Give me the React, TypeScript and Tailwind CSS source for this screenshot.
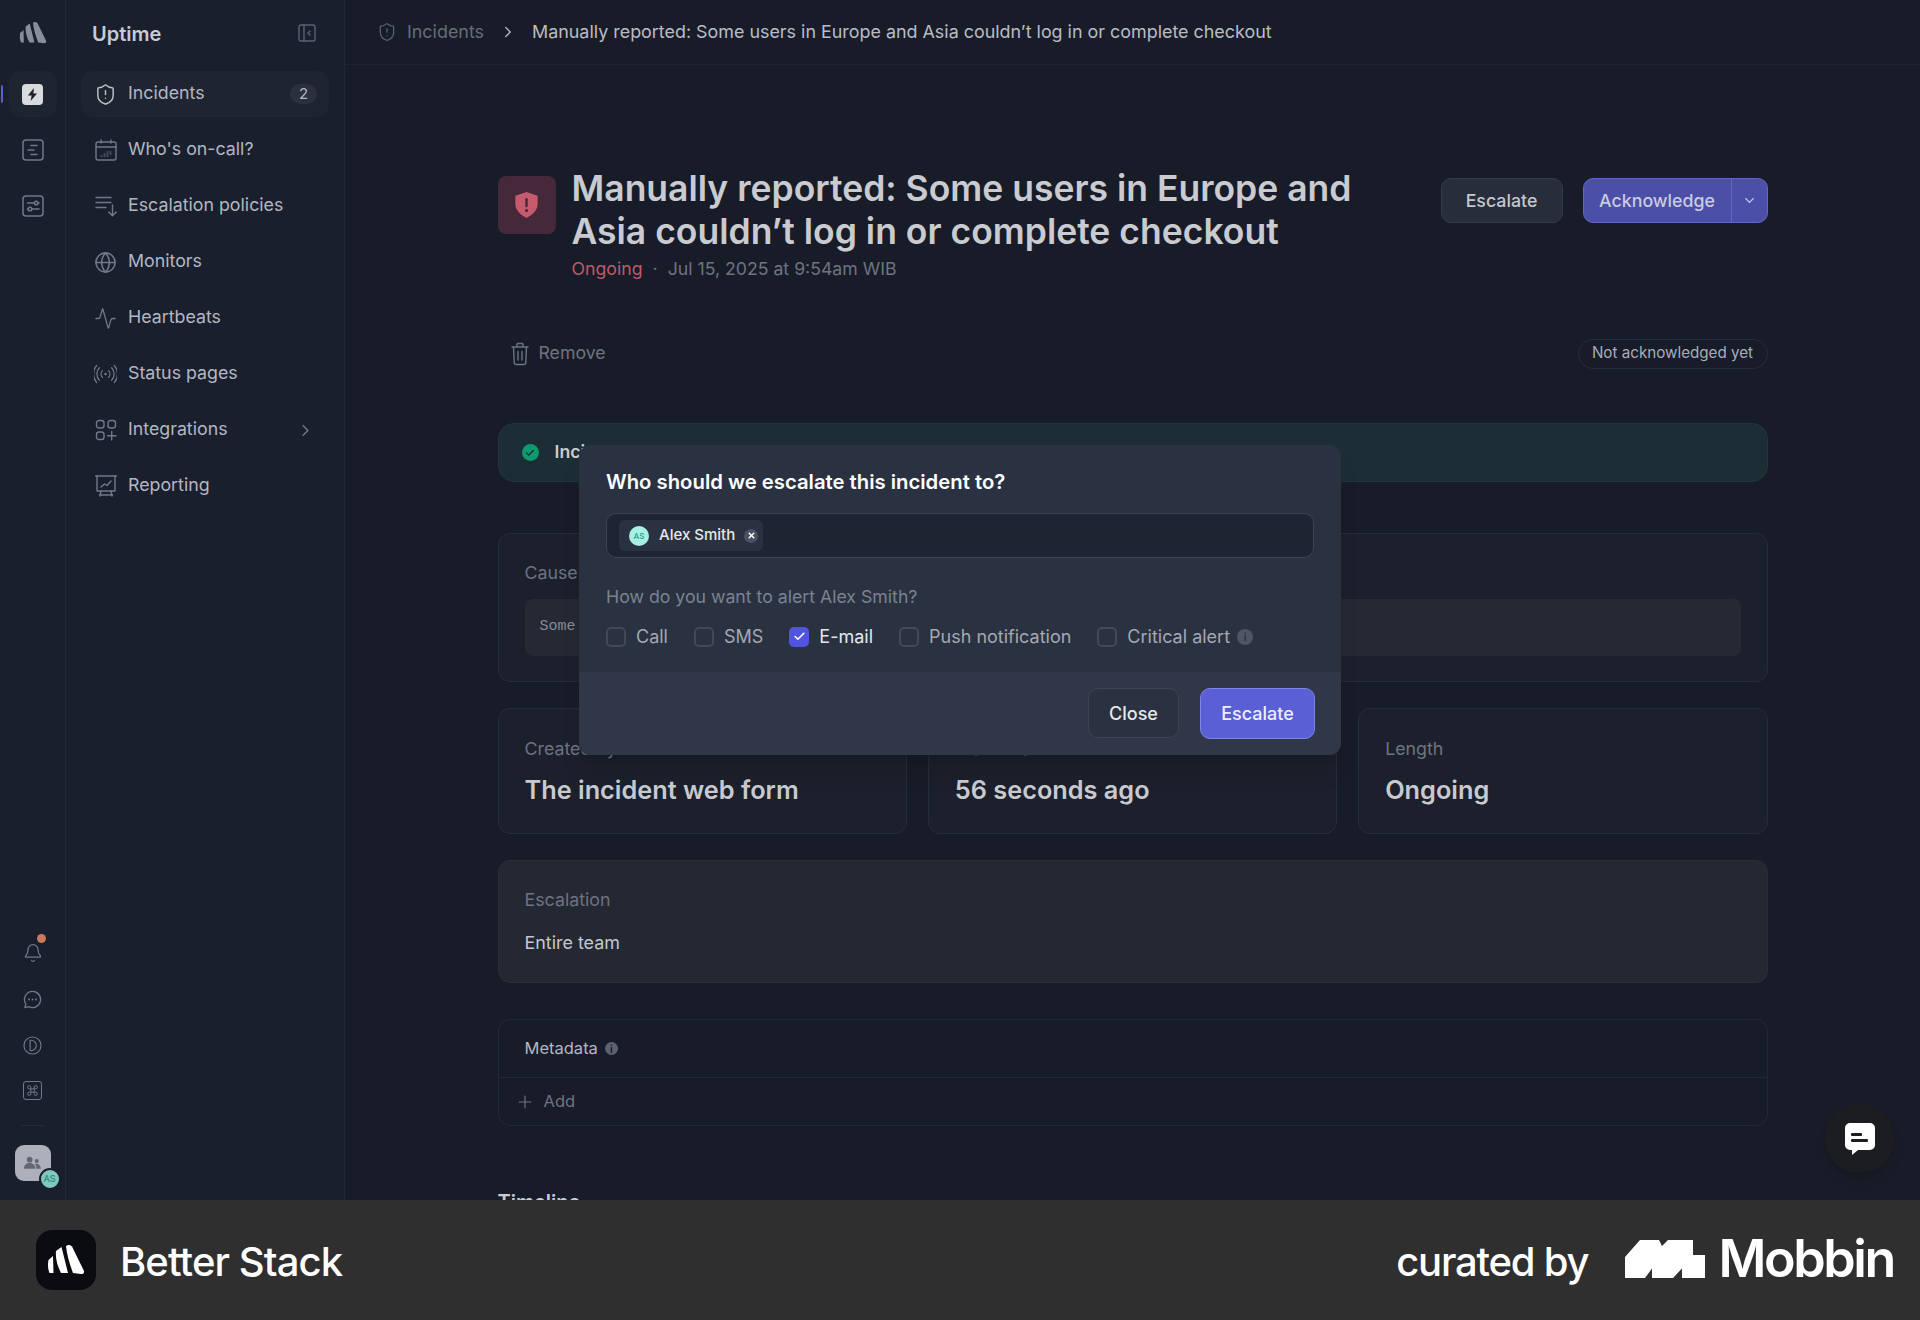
import React from "react";
import {
  Activity,
  Bell,
  Check,
  ChevronDown,
  ChevronRight,
  Command,
  Globe,
  Plus,
  ShieldAlert,
  X,
} from "lucide-react";

const BarsLogo = ({ className }: { className: string }) => (
  <svg viewBox="0 0 38 30" className={className} fill="currentColor">
    <path d="M1.5 15 L6 11 L6.5 28 L2.5 28 Q0 22 1.5 15Z" />
    <path d="M9 6 L14.5 2 L21 28 L14 28 Q8 16 9 6Z" />
    <path d="M19 1 Q22 -1 25 1.5 L37 26 Q37.5 29 34 29 L26 28 Q20 12 19 1Z" />
  </svg>
);

const EscalationIcon = () => (
  <svg viewBox="0 0 22 22" className="h-[22px] w-[22px]" fill="none" stroke="currentColor" strokeWidth="1.4" strokeLinecap="round" strokeLinejoin="round">
    <path d="M1 2.5h15M1 7.5h15M1 12.5h10" />
    <path d="M17.5 10v10.5M13.8 17l3.7 3.7 3.7-3.7" />
  </svg>
);

const CalendarIcon = () => (
  <svg viewBox="0 0 22 22" className="h-[22px] w-[22px]" fill="none" stroke="currentColor" strokeWidth="1.4" strokeLinecap="round">
    <rect x="1" y="3" width="20" height="18" rx="2" />
    <path d="M1 8h20M6 1v3M16 1v3" />
    <path d="M6 17h1M9 17h1M9 15h1M12 17h1M12 15h1M12 13h1M15 15h1M15 13h1" strokeWidth="1" />
  </svg>
);

const StatusIcon = () => (
  <svg viewBox="0 0 24 20" className="h-[20px] w-[24px]" fill="none" stroke="currentColor" strokeWidth="1.3" strokeLinecap="round">
    <circle cx="12" cy="10" r="1.3" fill="currentColor" stroke="none" />
    <path d="M8.8 6.5a5 5 0 0 0 0 7M15.2 6.5a5 5 0 0 1 0 7" />
    <path d="M5.6 3.5a9.5 9.5 0 0 0 0 13M18.4 3.5a9.5 9.5 0 0 1 0 13" />
    <path d="M2.8 1a14 14 0 0 0 0 18M21.2 1a14 14 0 0 1 0 18" />
  </svg>
);

const IntegrationsIcon = () => (
  <svg viewBox="0 0 22 22" className="h-[22px] w-[22px]" fill="none" stroke="currentColor" strokeWidth="1.4" strokeLinecap="round">
    <rect x="1.5" y="1.5" width="7.5" height="7.5" rx="2.5" />
    <rect x="13" y="1.5" width="7.5" height="7.5" rx="2.5" />
    <rect x="1.5" y="13" width="7.5" height="7.5" rx="2.5" />
    <path d="M16.7 12.5v8.5M12.5 16.7h8.5" />
  </svg>
);

const ReportingIcon = () => (
  <svg viewBox="0 0 22 22" className="h-[22px] w-[22px]" fill="none" stroke="currentColor" strokeWidth="1.4" strokeLinecap="round" strokeLinejoin="round">
    <path d="M0.5 1h21" />
    <path d="M2 1v15h18V1" />
    <path d="M6 12l3.5-3 2.5 1.5L16 6" />
    <path d="M6 16l-1 5M16 16l1 5M4.5 20h13" />
  </svg>
);

const TrashIcon = () => (
  <svg viewBox="0 0 18 24" className="h-[24px] w-[18px]" fill="none" stroke="currentColor" strokeWidth="1.4" strokeLinecap="round" strokeLinejoin="round">
    <path d="M1 5h16M6 5V2.5a1 1 0 0 1 1-1h4a1 1 0 0 1 1 1V5" />
    <path d="M2.5 5l.7 15.5a2 2 0 0 0 2 2h7.600a2 2 0 0 0 2-2L15.500 5" />
    <path d="M7 9.500v8.500M11 9.500v8.500" />
  </svg>
);

const ChatDotsIcon = () => (
  <svg viewBox="0 0 20 20" className="h-[19px] w-[19px]" fill="none" stroke="currentColor" strokeWidth="1.4" strokeLinejoin="round">
    <path d="M10 1.500a8.500 8.500 0 1 1-3.800 16.100L2 18.500l1-3.800A8.500 8.500 0 0 1 10 1.500z" />
    <circle cx="6.300" cy="10" r="1" fill="currentColor" stroke="none" />
    <circle cx="10" cy="10" r="1" fill="currentColor" stroke="none" />
    <circle cx="13.700" cy="10" r="1" fill="currentColor" stroke="none" />
  </svg>
);

const RailSquare = ({ children }: { children: React.ReactNode }) => (
  <svg viewBox="0 0 22 22" className="h-[22px] w-[22px]" fill="none" stroke="currentColor" strokeWidth="1.5" strokeLinecap="round">
    <rect x="1" y="1" width="20" height="20" rx="3" />
    {children}
  </svg>
);

const Info = ({ className }: { className: string }) => (
  <span className={`flex items-center justify-center rounded-full text-[10px] font-bold leading-none ${className}`}>i</span>
);

const nav = [
  { label: "Incidents", icon: <ShieldAlert className="h-[23px] w-[23px]" strokeWidth={1.5} />, active: true },
  { label: "Who's on-call?", icon: <CalendarIcon /> },
  { label: "Escalation policies", icon: <EscalationIcon /> },
  { label: "Monitors", icon: <Globe className="h-[23px] w-[23px]" strokeWidth={1.7} /> },
  { label: "Heartbeats", icon: <Activity className="h-[23px] w-[23px]" strokeWidth={1.4} /> },
  { label: "Status pages", icon: <StatusIcon /> },
  { label: "Integrations", icon: <IntegrationsIcon />, chevron: true },
  { label: "Reporting", icon: <ReportingIcon /> },
];

const Rail = () => (
  <aside className="flex w-[66px] shrink-0 flex-col items-center border-r border-[#252a37] bg-[#1a1f2d] text-[#727887]">
    <div className="flex h-[65px] items-center">
      <BarsLogo className="h-[22px] w-[28px] text-[#8a8e9c]" />
    </div>
    <div className="relative mt-[6px] flex h-[46px] w-[48px] items-center justify-center rounded-xl bg-[#1f2431]">
      <span className="absolute left-[-8px] top-[14px] h-[18px] w-[2px] rounded-r bg-[#5b60d6]" />
      <span className="flex h-[21px] w-[21px] items-center justify-center rounded-[4px] bg-[#d9dadd]">
        <svg viewBox="0 0 12 14" className="h-[13px] w-[11px] fill-[#1a1f2d]">
          <path d="M7.5 0 L1 8 H5 L4 14 L11 6 H7Z" />
        </svg>
      </span>
    </div>
    <div className="mt-[22px] flex flex-col gap-[34px]">
      <RailSquare>
        <path d="M9 6.5h6M6 11h6M9 15.500h6" />
      </RailSquare>
      <RailSquare>
        <path d="M5.500 8h7M16 8h1M5.500 14h1M10 14h7" />
        <circle cx="14.200" cy="8" r="1.800" />
        <circle cx="8" cy="14" r="1.800" />
      </RailSquare>
    </div>
    <div className="mt-auto flex flex-col items-center">
      <div className="relative flex h-[46px] items-center">
        <Bell className="h-[20px] w-[20px]" strokeWidth={1.5} />
        <span className="absolute right-[-3px] top-[4px] h-[9px] w-[9px] rounded-full bg-[#c87a5a]" />
      </div>
      <div className="flex h-[46px] items-center">
        <ChatDotsIcon />
      </div>
      <div className="flex h-[46px] items-center">
        <svg viewBox="0 0 20 20" className="h-[19px] w-[19px]" fill="none" stroke="currentColor" strokeWidth="1.2">
          <circle cx="10" cy="10" r="9" />
          <path d="M7.500 4.500h1a5.500 5.500 0 0 1 0 11h-1z" />
        </svg>
      </div>
      <div className="flex h-[44px] items-center">
        <span className="flex h-[19px] w-[19px] items-center justify-center rounded-[3px] border-[1.5px] border-current">
          <Command className="h-[13px] w-[13px]" strokeWidth={1.8} />
        </span>
      </div>
      <div className="mt-[13px] h-px w-[24px] bg-[#252a37]" />
      <div className="relative mb-[19px] mt-[19px] flex h-[36px] w-[36px] items-center justify-center rounded-[9px] bg-[#adb0ba]">
        <svg viewBox="0 0 18 14" className="h-[16px] w-[17px] fill-[#626776]">
          <circle cx="6" cy="3.500" r="3" />
          <circle cx="13.500" cy="5" r="2.200" />
          <path d="M0 13c0-4 2.500-6 6-6s6 2 6 6zM13 13c0-2-.5-4-1.500-5 3-1 6 1 6.500 5z" />
        </svg>
        <span className="absolute bottom-[-9px] right-[-10px] flex h-[22px] w-[22px] items-center justify-center rounded-full border-2 border-[#1a1f2d] bg-[#7fc8bc] text-[9px] font-medium text-[#2b8b7d]">
          AS
        </span>
      </div>
    </div>
  </aside>
);

const Sidebar = () => (
  <aside className="flex w-[279px] shrink-0 flex-col border-r border-[#232836] bg-[#1a1f2d] px-[15px]">
    <div className="flex h-[65px] items-center justify-between pl-[11px] pr-[13px]">
      <span className="mt-[2px] text-[20px] font-semibold text-[#c9cbd2]">Uptime</span>
      <svg viewBox="0 0 18 18" className="h-[18px] w-[18px] text-[#5c6272]" fill="none" stroke="currentColor" strokeWidth="1.4" strokeLinecap="round">
        <rect x="1" y="1" width="16" height="16" rx="2" />
        <path d="M6 1v16M12 7l-2 2 2 2" />
      </svg>
    </div>
    <nav className="mt-[6px] flex flex-col gap-[10px]">
      {nav.map((item) => (
        <div
          key={item.label}
          className={`flex h-[46px] items-center gap-[11px] rounded-xl pl-[13px] pr-[12px] ${item.active ? "bg-[#1f2431]" : ""}`}
        >
          <span className={`flex w-[23px] justify-center ${item.active ? "text-[#bfc2ca]" : "text-[#727887]"}`}>{item.icon}</span>
          <span className="mt-[-1px] flex-1 text-[17.8px] text-[#b3b7c1]">{item.label}</span>
          {item.active && (
            <span className="flex h-[20px] w-[27px] items-center justify-center rounded-full bg-[#2a303d] text-[15px] text-[#b3b7c1]">2</span>
          )}
          {item.chevron && <ChevronRight className="mr-[2px] h-[19px] w-[19px] text-[#727887]" strokeWidth={1.8} />}
        </div>
      ))}
    </nav>
  </aside>
);

const StatCard = ({ label, value }: { label: string; value: string }) => (
  <div className="h-[126px] rounded-xl border border-[#272c39] bg-[#1c202c] pl-[26px] pt-[26px]">
    <div className="text-[17.8px] leading-[28px] text-[#6e7381]">{label}</div>
    <div className="mt-[9px] text-[25.3px] font-semibold leading-[36px] text-[#c8cad0]">{value}</div>
  </div>
);

const Incident = () => (
  <div className="mx-auto w-[1270px] pt-[102px]">
    <div className="flex items-start">
      <div className="mt-[9px] flex h-[58px] w-[58px] shrink-0 items-center justify-center rounded-lg bg-[#45283a]">
        <svg viewBox="0 0 24 28" className="h-[26px] w-[23px]">
          <path d="M12 0 L24 4 V13 C24 20 18 25 12 28 C6 25 0 20 0 13 V4Z" fill="#c75a6c" />
          <rect x="10.700" y="6.500" width="2.600" height="10" rx="1.300" fill="#45283a" />
          <circle cx="12" cy="20" r="1.700" fill="#45283a" />
        </svg>
      </div>
      <div className="ml-[16px] flex-1">
        <h1 className="w-[800px] text-[35.5px] font-semibold leading-[43px] text-[#c9cbd1]">
          Manually reported: Some users in Europe and Asia couldn’t log in or complete checkout
        </h1>
        <div className="mt-[2px] flex items-center text-[17.7px] leading-[28px] text-[#6e7381]">
          <span className="text-[#bd5a6c]">Ongoing</span>
          <span className="mx-[10px]">·</span>
          <span>Jul 15, 2025 at 9:54am WIB</span>
        </div>
      </div>
      <div className="mt-[11px] flex items-center gap-[20px]">
        <button className="h-[45px] w-[122px] rounded-[10px] border border-[#343a48] bg-[#272d3a] pt-[2px] text-[17.8px] font-medium text-[#c4c7ce]">Escalate</button>
        <div className="flex h-[45px] w-[185px] rounded-[10px] border border-[#6166c8] bg-[#4b4fa8] text-[#c9cbe0]">
          <span className="flex flex-1 items-center justify-center pt-[2px] text-[17.8px] font-medium">Acknowledge</span>
          <span className="flex w-[36px] items-center justify-center border-l border-[#6166c8]">
            <ChevronDown className="h-[15px] w-[15px]" strokeWidth={2.2} />
          </span>
        </div>
      </div>
    </div>

    <div className="mt-[56px] flex h-[30px] items-center justify-between">
      <div className="flex items-center gap-[10px] pl-[13px] text-[17.7px] text-[#6e7381]">
        <TrashIcon />
        <span className="mt-[-1px]">Remove</span>
      </div>
      <span className="flex h-[30px] w-[190px] items-center justify-center rounded-full border border-[#272c39] pb-[1px] text-[15.2px] text-[#a9adb8]">Not acknowledged yet</span>
    </div>

    <div className="mt-[54px] flex h-[59px] items-center gap-[16px] rounded-2xl border border-[#20363a] bg-[#1c2d35] pl-[23px]">
      <span className="flex h-[17px] w-[17px] items-center justify-center rounded-full bg-[#0f9a6e]">
        <Check className="h-[10px] w-[10px] text-[#112233]" strokeWidth={3} />
      </span>
      <span className="text-[17.7px] font-semibold text-[#c9cbd1]">Incident started</span>
    </div>

    <div className="mt-[51px] h-[149px] rounded-xl border border-[#272c39] bg-[#1c202c] px-[26px] pt-[25px]">
      <div className="text-[17.8px] leading-[28px] text-[#6e7381]">Cause</div>
      <div className="mt-[12px] flex h-[57px] items-center rounded-lg bg-[#252933] pl-[15px] font-['Liberation_Mono',monospace] text-[15px] text-[#858a96]">Some users</div>
    </div>

    <div className="mt-[26px] grid grid-cols-3 gap-[21px]">
      <StatCard label="Created by" value="The incident web form" />
      <StatCard label="Started at" value="56 seconds ago" />
      <StatCard label="Length" value="Ongoing" />
    </div>

    <div className="mt-[26px] h-[123px] rounded-xl border border-[#292e3a] bg-[#242833] pl-[26px] pt-[25px]">
      <div className="text-[17.8px] leading-[28px] text-[#6e7381]">Escalation</div>
      <div className="mt-[15px] text-[17.9px] leading-[28px] text-[#c4c7ce]">Entire team</div>
    </div>

    <div className="mt-[36px] h-[107px] rounded-xl border border-[#232835]">
      <div className="flex h-[58px] items-center gap-[7px] border-b border-[#232835] pl-[26px] text-[16.5px] text-[#b3b7c1]">
        Metadata
        <Info className="h-[13px] w-[13px] bg-[#5c6272] text-[#1a1e2b]" />
      </div>
      <div className="flex h-[47px] items-center gap-[9px] pl-[16px] text-[16.5px] text-[#6e7381]">
        <Plus className="h-[20px] w-[20px]" strokeWidth={1.4} />
        Add
      </div>
    </div>

    <div className="mt-[62px] text-[20px] font-semibold leading-[28px] text-[#c9cbd1]">Timeline</div>
  </div>
);

const channels = [
  { label: "Call" },
  { label: "SMS" },
  { label: "E-mail", checked: true },
  { label: "Push notification" },
  { label: "Critical alert", info: true },
];

const EscalateDialog = () => (
  <div className="absolute left-[579px] top-[445px] w-[762px] overflow-hidden rounded-xl bg-[#2a3241] shadow-xl">
    <div className="h-[227px] px-[27px] pt-[23px]">
      <h2 className="text-[20.3px] font-semibold leading-[28px] text-white">Who should we escalate this incident to?</h2>
      <div className="mt-[17px] flex h-[45px] w-[708px] items-center rounded-[10px] border border-[#3c4454] bg-[#1e2431] pl-[12px]">
        <div className="flex h-[31px] items-center gap-[10px] rounded-md bg-[#2a3241] pl-[10px] pr-[5px]">
          <span className="flex h-[20px] w-[20px] items-center justify-center rounded-full bg-[#a6f0e4] text-[8px] font-medium text-[#2b9d8c]">AS</span>
          <span className="mt-[-1px] text-[15px] font-medium text-[#e6e7ea]">Alex Smith</span>
          <span className="ml-[-1px] flex h-[14px] w-[14px] items-center justify-center rounded-full bg-[#4a5262]">
            <X className="h-[9px] w-[9px] text-white" strokeWidth={4} />
          </span>
        </div>
      </div>
      <div className="mt-[25px] text-[17.7px] leading-[28px] text-[#7b8291]">How do you want to alert Alex Smith?</div>
      <div className="mt-[12px] flex items-center gap-[26px]">
        {channels.map((c) => (
          <label key={c.label} className="flex items-center gap-[10px]">
            {c.checked ? (
              <span className="flex h-[20px] w-[20px] items-center justify-center rounded-[5px] bg-[#5154e0]">
                <Check className="h-[13px] w-[13px] text-white" strokeWidth={3} />
              </span>
            ) : (
              <span className="h-[20px] w-[20px] rounded-[5px] border-2 border-[#414958]" />
            )}
            <span className={`text-[18px] ${c.checked ? "text-[#e6e7ea]" : "text-[#a3a8b3]"}`}>{c.label}</span>
            {c.info && <Info className="ml-[-3px] h-[16px] w-[16px] bg-[#4d5566] text-[#2a3241]" />}
          </label>
        ))}
      </div>
    </div>
    <div className="flex h-[83px] justify-end gap-[21px] bg-[#2f3748] pr-[26px] pt-[16px]">
      <button className="h-[50px] w-[91px] rounded-[10px] border border-[#3c4454] bg-[#2a3140] text-[18px] font-medium text-[#e6e7ea]">Close</button>
      <button className="h-[51px] w-[115px] rounded-[10px] border border-[#7f84ea] bg-[#5a5fd6] text-[18px] font-medium text-[#eceefb]">Escalate</button>
    </div>
  </div>
);

const Footer = () => (
  <footer className="flex h-[120px] shrink-0 items-center justify-between bg-[#2f2f2f] pl-[36px] pr-[26px] text-white">
    <div className="flex items-center gap-[24px]">
      <span className="flex h-[60px] w-[60px] items-center justify-center rounded-2xl bg-[#0b0c11]">
        <BarsLogo className="h-[30px] w-[38px] text-white" />
      </span>
      <span className="mt-[3px] text-[40px] font-medium tracking-[-0.9px]">Better Stack</span>
    </div>
    <div className="flex items-center">
      <span className="mt-[3px] text-[40px] font-medium tracking-[-1.2px]">curated by</span>
      <svg viewBox="0 0 80 38" className="ml-[37px] mt-[-3px] h-[38px] w-[80px] fill-white">
        <path d="M0 38 H20 L27 28.5 V38 H48 L57 28.5 V38 H80 V15 H68 V0 H43 L37 6 L34 0 H15 L0 17Z" />
      </svg>
      <span className="ml-[13px] mt-[-2px] text-[52px] font-semibold leading-none tracking-[-2.4px]">Mobbin</span>
    </div>
  </footer>
);

const App = () => {
  return (
    <div className="relative flex h-[1320px] w-[1920px] flex-col overflow-hidden bg-[#181c28] font-['Inter',sans-serif]">
      <div className="flex h-[1200px] overflow-hidden">
        <Rail />
        <Sidebar />
        <main className="flex min-w-0 flex-1 flex-col overflow-hidden">
          <div className="flex h-[65px] shrink-0 items-center border-b border-[#202431] pl-[32px] text-[17.9px]">
            <ShieldAlert className="h-[20px] w-[20px] text-[#5c6272]" strokeWidth={1.5} />
            <span className="ml-[10px] text-[#676c7a]">Incidents</span>
            <ChevronRight className="ml-[15px] h-[18px] w-[18px] text-[#b3b7c1]" strokeWidth={1.8} />
            <span className="ml-[15px] text-[#b9bcc5]">Manually reported: Some users in Europe and Asia couldn’t log in or complete checkout</span>
          </div>
          <Incident />
        </main>
      </div>
      <Footer />
      <EscalateDialog />
      <button className="absolute left-[1825px] top-[1104px] flex h-[69px] w-[69px] items-center justify-center rounded-full bg-[#1c1d21] shadow-lg">
        <svg viewBox="0 0 30 32" className="h-[32px] w-[30px]">
          <path d="M5 0h20a5 5 0 0 1 5 5v17a5 5 0 0 1-5 5H13l-6 5v-5H5a5 5 0 0 1-5-5V5a5 5 0 0 1 5-5z" fill="#fff" />
          <rect x="6" y="10" width="11" height="3" rx="1" fill="#1c1d21" />
          <rect x="6" y="16" width="17" height="3" rx="1" fill="#1c1d21" />
        </svg>
      </button>
    </div>
  );
};

export default App;
